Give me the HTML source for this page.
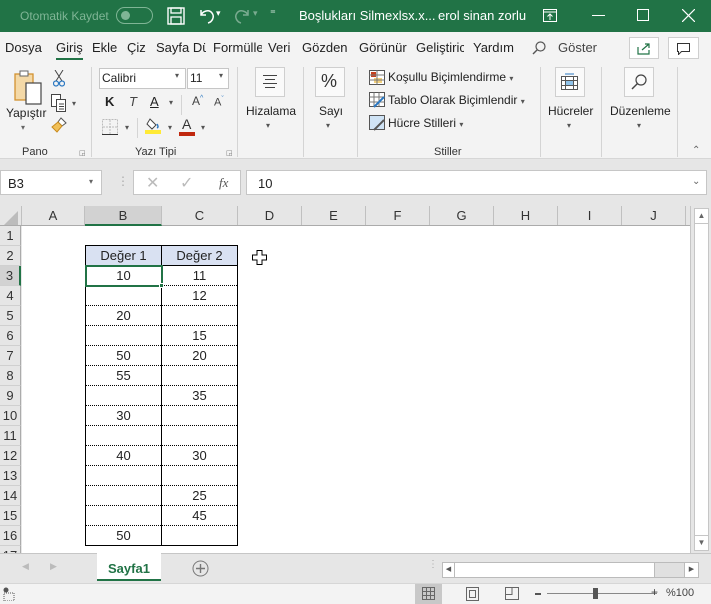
<!DOCTYPE html>
<html><head><meta charset="utf-8">
<style>
*{margin:0;padding:0;box-sizing:border-box}
body{width:711px;height:604px;overflow:hidden;font-family:"Liberation Sans",sans-serif;background:#f3f3f3;position:relative;color:#222}
.a{position:absolute}
.t{font-size:13px;white-space:nowrap}
#title{left:0;top:0;width:711px;height:32px;background:#217346;color:#fff}
#tabs{top:32px;left:0;width:711px;height:30px;background:#f3f3f3}
#rib{top:62px;left:0;width:711px;height:97px;background:#f3f3f3;border-bottom:1px solid #d6d6d6}
.sep{position:absolute;width:1px;background:#d4d4d4}
.grp{font-size:11px;color:#333}
.btnbox{position:absolute;border:1px solid #cfcfcf;background:#fafafa}
#fbar{top:159px;left:0;width:711px;height:48px;background:#e6e6e6}
.box{position:absolute;background:#fff;border:1px solid #c6c6c6}
#hdr{top:206px;left:0;width:691px;height:20px;background:#e6e6e6;border-bottom:1px solid #ababab}
.ch{position:absolute;top:0;height:19px;border-right:1px solid #c0c0c0;text-align:center;font-size:13px;line-height:20px;color:#333}
.rh{position:absolute;left:0;width:21px;height:20px;background:#e6e6e6;border-bottom:1px solid #d0d0d0;border-right:1px solid #ababab;text-align:center;font-size:13px;line-height:20px;color:#333}
#grid{top:226px;left:22px;width:668px;height:327px;background:#fff}
.cell{position:absolute;font-size:13px;text-align:center;line-height:20px;font-family:"Liberation Sans",sans-serif}
</style></head><body>
<div id="title" class="a">
 <div class="a t" style="left:20px;top:9px;color:#7fb595;font-size:12px">Otomatik Kaydet</div>
 <div class="a" style="left:116px;top:7px;width:37px;height:17px;border:1.5px solid #7fb595;border-radius:9px"><div style="position:absolute;left:4px;top:3px;width:9px;height:9px;border-radius:50%;background:#7fb595"></div></div>
 <svg class="a" style="left:167px;top:7px" width="18" height="18"><rect x="1" y="1" width="16" height="16" fill="none" stroke="#fff" stroke-width="1.4"/><rect x="4" y="1" width="10" height="5" fill="none" stroke="#fff" stroke-width="1.3"/><rect x="4" y="10" width="10" height="7" fill="none" stroke="#fff" stroke-width="1.3"/></svg>
 <svg class="a" style="left:197px;top:6px" width="20" height="18"><path d="M4 4v5h5M4 9c2-4 8-6 11-2 3 4 0 9-4 10" fill="none" stroke="#fff" stroke-width="1.5"/></svg>
 <div class="a t" style="left:216px;top:8px;font-size:9px">▾</div>
 <svg class="a" style="left:232px;top:6px;opacity:.4" width="20" height="18"><path d="M16 4v5h-5M16 9c-2-4-8-6-11-2-3 4 0 9 4 10" fill="none" stroke="#fff" stroke-width="1.5"/></svg>
 <div class="a t" style="left:253px;top:8px;font-size:9px;opacity:.4">▾</div>
 <div class="a t" style="left:270px;top:7px;font-size:11px">⁼</div>
 <div class="a t" style="left:299px;top:8px">Boşlukları Silmexlsx.x...</div>
 <div class="a t" style="left:438px;top:8px">erol sinan zorlu</div>
 <svg class="a" style="left:543px;top:9px" width="14" height="13"><rect x=".5" y=".5" width="13" height="12" fill="none" stroke="#fff"/><path d="M1 3h12M7 11V5M4.5 7.5L7 5l2.5 2.5" fill="none" stroke="#fff"/></svg>
 <div class="a" style="left:592px;top:15px;width:13px;height:1px;background:#fff"></div>
 <div class="a" style="left:637px;top:9px;width:12px;height:12px;border:1px solid #fff"></div>
 <svg class="a" style="left:682px;top:9px" width="13" height="13"><path d="M0 0L13 13M13 0L0 13" stroke="#fff" stroke-width="1.2"/></svg>
</div>
<div id="tabs" class="a">
 <div class="a t" style="left:5px;top:8px">Dosya</div>
 <div class="a t" style="left:56px;top:8px">Giriş</div>
 <div class="a" style="left:56px;top:26px;width:27px;height:2px;background:#217346"></div>
 <div class="a t" style="left:92px;top:8px">Ekle</div>
 <div class="a t" style="left:127px;top:8px">Çiz</div>
 <div class="a t" style="left:156px;top:8px;width:50px;overflow:hidden">Sayfa Dü</div>
 <div class="a t" style="left:213px;top:8px;width:49px;overflow:hidden">Formülle</div>
 <div class="a t" style="left:268px;top:8px">Veri</div>
 <div class="a t" style="left:302px;top:8px">Gözden</div>
 <div class="a t" style="left:359px;top:8px">Görünür</div>
 <div class="a t" style="left:416px;top:8px;width:48px;overflow:hidden">Geliştiric</div>
 <div class="a t" style="left:473px;top:8px">Yardım</div>
 <svg class="a" style="left:532px;top:9px" width="14" height="14"><circle cx="8.5" cy="5.5" r="4.5" fill="none" stroke="#555" stroke-width="1.2"/><path d="M5 9L1 13" stroke="#555" stroke-width="1.4"/></svg>
 <div class="a t" style="left:558px;top:8px;color:#444">Göster</div>
 <div class="btnbox" style="left:629px;top:5px;width:30px;height:22px;background:#fff"></div>
 <svg class="a" style="left:637px;top:10px" width="14" height="13"><path d="M1 5v7h11V8M5 8l7-6M8 2h4v4" fill="none" stroke="#217346" stroke-width="1.2"/></svg>
 <div class="btnbox" style="left:668px;top:5px;width:31px;height:22px;background:#fff"></div>
 <svg class="a" style="left:677px;top:11px" width="13" height="12"><path d="M.5.5h12v8h-8l-3 3v-3h-1z" fill="none" stroke="#333"/></svg>
</div>
<div id="rib" class="a">
 <svg class="a" style="left:13px;top:8px" width="30" height="36"><rect x="2" y="4" width="18" height="26" fill="#f4d9a7" stroke="#d39230" stroke-width="1.3"/><rect x="7" y="1" width="8" height="5" fill="#fff" stroke="#666"/><rect x="13" y="13" width="15" height="21" fill="#fff" stroke="#444" stroke-width="1.2"/></svg>
 <div class="a t" style="left:6px;top:44px;font-size:12px">Yapıştır</div>
 <div class="a t" style="left:21px;top:61px;font-size:8px;color:#666">▾</div>
 <svg class="a" style="left:53px;top:8px" width="12" height="17"><path d="M2 0l7 11M10 0L3 11" stroke="#444"/><circle cx="3" cy="13.5" r="2.5" fill="none" stroke="#2b78c2" stroke-width="1.2"/><circle cx="9" cy="13.5" r="2.5" fill="none" stroke="#2b78c2" stroke-width="1.2"/></svg>
 <svg class="a" style="left:51px;top:32px" width="16" height="18"><rect x=".5" y=".5" width="9" height="12" fill="#fff" stroke="#444"/><rect x="5.5" y="5.5" width="9" height="12" fill="#fff" stroke="#444"/><path d="M8 10h5M8 12.5h5M8 15h5" stroke="#444"/></svg>
 <div class="a t" style="left:72px;top:37px;font-size:8px;color:#555">▾</div>
 <svg class="a" style="left:51px;top:55px" width="16" height="16"><path d="M10 1l5 5-4 3-4-4z" fill="#fff" stroke="#555"/><path d="M1 10l6-5 4 4-5 6z" fill="#f1c057" stroke="#c88a1c"/></svg>
 <div class="a grp" style="left:22px;top:84px">Pano</div>
 <div class="a" style="left:79px;top:87px;font-size:7px;color:#777">◲</div>
 <div class="sep" style="left:91px;top:5px;height:90px"></div>
 <div class="box" style="left:99px;top:6px;width:87px;height:21px;border-color:#c6c6c6"></div>
 <div class="a t" style="left:102px;top:9px;font-size:12px">Calibri</div>
 <div class="a" style="left:175px;top:9px;font-size:8px;color:#555">▾</div>
 <div class="box" style="left:187px;top:6px;width:42px;height:21px"></div>
 <div class="a t" style="left:190px;top:9px;font-size:12px">11</div>
 <div class="a" style="left:219px;top:9px;font-size:8px;color:#555">▾</div>
 <div class="a t" style="left:105px;top:32px;font-weight:bold;font-size:13px">K</div>
 <div class="a t" style="left:129px;top:32px;font-style:italic;font-size:13px;color:#444">T</div>
 <div class="a t" style="left:150px;top:32px;text-decoration:underline;font-size:13px">A</div>
 <div class="a" style="left:169px;top:36px;font-size:8px;color:#555">▾</div>
 <div class="sep" style="left:181px;top:33px;height:20px"></div>
 <div class="a t" style="left:192px;top:32px;font-size:12px;color:#444">A<sup style="font-size:7px;color:#2b78c2">^</sup></div>
 <div class="a t" style="left:214px;top:34px;font-size:11px;color:#444">A<sup style="font-size:7px;color:#2b78c2">ˇ</sup></div>
 <svg class="a" style="left:102px;top:57px" width="16" height="16"><rect x=".5" y=".5" width="15" height="15" fill="none" stroke="#bbb" stroke-dasharray="2 1"/><path d="M8 1v14M1 8h14" stroke="#bbb" stroke-dasharray="2 1"/><path d="M0 15.5h16" stroke="#333"/></svg>
 <div class="a" style="left:125px;top:61px;font-size:8px;color:#555">▾</div>
 <div class="sep" style="left:137px;top:56px;height:20px"></div>
 <svg class="a" style="left:145px;top:55px" width="16" height="18"><path d="M5 2l6 6-4 4-5-5z" fill="#fff" stroke="#444"/><path d="M12 7q2 3 0 4" stroke="#2b78c2" fill="none" stroke-width="1.5"/><rect x="0" y="13" width="16" height="4" fill="#ffea36"/></svg>
 <div class="a" style="left:168px;top:61px;font-size:8px;color:#555">▾</div>
 <div class="a t" style="left:182px;top:54px;font-size:14px;color:#333">A</div>
 <div class="a" style="left:179px;top:70px;width:16px;height:4px;background:#c0280e"></div>
 <div class="a" style="left:201px;top:61px;font-size:8px;color:#555">▾</div>
 <div class="a grp" style="left:135px;top:84px">Yazı Tipi</div>
 <div class="a" style="left:226px;top:87px;font-size:7px;color:#777">◲</div>
 <div class="sep" style="left:237px;top:5px;height:90px"></div>
 <div class="btnbox" style="left:255px;top:5px;width:30px;height:30px"></div>
 <svg class="a" style="left:262px;top:13px" width="16" height="13"><path d="M1 .5h14M3 4.5h10M1 8.5h14M3 12.5h10" stroke="#444"/></svg>
 <div class="a t" style="left:246px;top:42px;font-size:12px">Hizalama</div>
 <div class="a" style="left:266px;top:59px;font-size:8px;color:#555">▾</div>
 <div class="sep" style="left:303px;top:5px;height:90px"></div>
 <div class="btnbox" style="left:315px;top:5px;width:30px;height:30px"></div>
 <div class="a t" style="left:321px;top:9px;font-size:18px;color:#333">%</div>
 <div class="a t" style="left:319px;top:42px;font-size:12px">Sayı</div>
 <div class="a" style="left:326px;top:59px;font-size:8px;color:#555">▾</div>
 <div class="sep" style="left:357px;top:5px;height:90px"></div>
 <svg class="a" style="left:369px;top:8px" width="16" height="15"><rect x=".5" y=".5" width="15" height="14" fill="#fff" stroke="#555"/><rect x="2" y="2" width="5" height="5" fill="#c5401f"/><rect x="5" y="8" width="8" height="5" fill="#f4d27f"/><path d="M8 .5v14M.5 5h15M.5 10h15" stroke="#777"/></svg>
 <div class="a t" style="left:388px;top:8px;font-size:12px">Koşullu Biçimlendirme <span style="font-size:8px;color:#555">▾</span></div>
 <svg class="a" style="left:369px;top:30px" width="17" height="16"><rect x=".5" y=".5" width="15" height="14" fill="#fff" stroke="#555"/><path d="M5 .5v14M10 .5v14M.5 5h15M.5 10h15" stroke="#777"/><path d="M5 15l10-10" stroke="#2b78c2" stroke-width="2"/></svg>
 <div class="a t" style="left:388px;top:31px;font-size:12px">Tablo Olarak Biçimlendir <span style="font-size:8px;color:#555">▾</span></div>
 <svg class="a" style="left:369px;top:53px" width="17" height="16"><rect x=".5" y=".5" width="15" height="14" fill="#cfe3f5" stroke="#555"/><path d="M5 15l10-10" stroke="#555" stroke-width="2"/></svg>
 <div class="a t" style="left:388px;top:54px;font-size:12px">Hücre Stilleri <span style="font-size:8px;color:#555">▾</span></div>
 <div class="a grp" style="left:434px;top:84px">Stiller</div>
 <div class="sep" style="left:540px;top:5px;height:90px"></div>
 <div class="btnbox" style="left:555px;top:5px;width:30px;height:30px"></div>
 <svg class="a" style="left:561px;top:11px" width="18" height="18"><rect x=".5" y="3.5" width="16" height="13" fill="#fff" stroke="#555"/><rect x="4" y="7" width="9" height="5" fill="#8fc3ea"/><path d="M.5 7.5h16M.5 12.5h16M4.5 3.5v13M12.5 3.5v13" stroke="#555"/><path d="M4 1h9" stroke="#2b78c2"/></svg>
 <div class="a t" style="left:548px;top:42px;font-size:12px">Hücreler</div>
 <div class="a" style="left:567px;top:59px;font-size:8px;color:#555">▾</div>
 <div class="sep" style="left:601px;top:5px;height:90px"></div>
 <div class="btnbox" style="left:624px;top:5px;width:30px;height:30px"></div>
 <svg class="a" style="left:631px;top:12px" width="16" height="16"><circle cx="10" cy="6" r="5" fill="none" stroke="#444" stroke-width="1.2"/><path d="M6.5 9.5L1 15" stroke="#444" stroke-width="1.5"/></svg>
 <div class="a t" style="left:610px;top:42px;font-size:12px">Düzenleme</div>
 <div class="a" style="left:637px;top:59px;font-size:8px;color:#555">▾</div>
 <div class="sep" style="left:677px;top:5px;height:90px"></div>
 <div class="a" style="left:692px;top:83px;font-size:10px;color:#666">⌃</div>
</div>
<div id="fbar" class="a">
 <div class="box" style="left:0;top:11px;width:102px;height:25px"></div>
 <div class="a t" style="left:8px;top:17px">B3</div>
 <div class="a" style="left:89px;top:18px;font-size:8px;color:#666">▾</div>
 <div class="a" style="left:117px;top:15px;font-size:12px;color:#aaa">⋮</div>
 <div class="box" style="left:133px;top:11px;width:108px;height:25px"></div>
 <div class="a t" style="left:146px;top:14px;font-size:16px;color:#bbb">✕</div>
 <div class="a t" style="left:180px;top:14px;font-size:16px;color:#bbb">✓</div>
 <div class="a t" style="left:219px;top:16px;font-family:'Liberation Serif',serif;font-style:italic;color:#555">fx</div>
 <div class="box" style="left:246px;top:11px;width:461px;height:25px"></div>
 <div class="a t" style="left:258px;top:17px">10</div>
 <div class="a" style="left:692px;top:17px;font-size:10px;color:#666">⌄</div>
</div>
<div id="hdr" class="a">
 <svg class="a" style="left:4px;top:5px" width="15" height="14"><path d="M14 0v14H0z" fill="#bcbcbc"/></svg>
 <div class="ch" style="left:0;width:22px"></div>
 <div class="ch" style="left:22px;width:63px">A</div>
 <div class="ch" style="left:85px;width:77px;background:#d2d2d2;border-bottom:2px solid #217346;height:20px">B</div>
 <div class="ch" style="left:162px;width:76px">C</div>
 <div class="ch" style="left:238px;width:64px">D</div>
 <div class="ch" style="left:302px;width:64px">E</div>
 <div class="ch" style="left:366px;width:64px">F</div>
 <div class="ch" style="left:430px;width:64px">G</div>
 <div class="ch" style="left:494px;width:64px">H</div>
 <div class="ch" style="left:558px;width:64px">I</div>
 <div class="ch" style="left:622px;width:64px">J</div>
</div>
<div class="a" style="left:0;top:226px;width:22px;height:327px;background:#e6e6e6;overflow:hidden">
 <div class="rh" style="top:0">1</div><div class="rh" style="top:20px">2</div>
 <div class="rh" style="top:40px;background:#d2d2d2;border-right:2px solid #217346">3</div>
 <div class="rh" style="top:60px">4</div><div class="rh" style="top:80px">5</div><div class="rh" style="top:100px">6</div>
 <div class="rh" style="top:120px">7</div><div class="rh" style="top:140px">8</div><div class="rh" style="top:160px">9</div>
 <div class="rh" style="top:180px">10</div><div class="rh" style="top:200px">11</div><div class="rh" style="top:220px">12</div>
 <div class="rh" style="top:240px">13</div><div class="rh" style="top:260px">14</div><div class="rh" style="top:280px">15</div>
 <div class="rh" style="top:300px">16</div><div class="rh" style="top:320px">17</div>
</div>
<div id="grid" class="a"></div>
<div class="a" style="left:690px;top:206px;width:1px;height:347px;background:#c6c6c6"></div>
<div class="a" style="left:691px;top:206px;width:20px;height:347px;background:#e6e6e6"></div>
<div class="a" style="left:694px;top:208px;width:15px;height:343px;background:#fff;border:1px solid #c6c6c6"></div>
<div class="a" style="left:694px;top:208px;width:15px;height:16px;border:1px solid #c6c6c6;font-size:8px;color:#666;text-align:center;line-height:14px">▲</div>
<div class="a" style="left:694px;top:535px;width:15px;height:16px;border:1px solid #c6c6c6;font-size:8px;color:#666;text-align:center;line-height:14px">▼</div>
<!-- table -->
<div class="a" style="left:85px;top:245px;width:153px;height:301px;border:1px solid #000;background:#fff"></div>
<div class="a" style="left:86px;top:246px;width:151px;height:19px;background:#d9e1f2"></div>
<div class="a" style="left:85px;top:265px;width:153px;height:1px;background:#000"></div>
<svg class="a" style="left:86px;top:285px" width="151" height="261" shape-rendering="crispEdges"><g stroke="#000" stroke-dasharray="1 1"><path d="M0 .5h151M0 20.5h151M0 40.5h151M0 60.5h151M0 80.5h151M0 100.5h151M0 120.5h151M0 140.5h151M0 160.5h151M0 180.5h151M0 200.5h151M0 220.5h151M0 240.5h151"/></g></svg>
<div class="a" style="left:161px;top:245px;width:1px;height:301px;background:#000"></div>
<div class="a" style="left:85px;top:265px;width:78px;height:22px;border:2px solid #217346"></div>
<div class="a" style="left:159px;top:283px;width:5px;height:5px;background:#217346;border:1px solid #fff"></div>
<div class="cell" style="left:86px;top:246px;width:75px">Değer 1</div>
<div class="cell" style="left:162px;top:246px;width:75px">Değer 2</div>
<div class="cell" style="left:86px;top:266px;width:75px">10</div>
<div class="cell" style="left:162px;top:266px;width:75px">11</div>
<div class="cell" style="left:162px;top:286px;width:75px">12</div>
<div class="cell" style="left:86px;top:306px;width:75px">20</div>
<div class="cell" style="left:162px;top:326px;width:75px">15</div>
<div class="cell" style="left:86px;top:346px;width:75px">50</div>
<div class="cell" style="left:162px;top:346px;width:75px">20</div>
<div class="cell" style="left:86px;top:366px;width:75px">55</div>
<div class="cell" style="left:162px;top:386px;width:75px">35</div>
<div class="cell" style="left:86px;top:406px;width:75px">30</div>
<div class="cell" style="left:86px;top:446px;width:75px">40</div>
<div class="cell" style="left:162px;top:446px;width:75px">30</div>
<div class="cell" style="left:162px;top:486px;width:75px">25</div>
<div class="cell" style="left:162px;top:506px;width:75px">45</div>
<div class="cell" style="left:86px;top:526px;width:75px">50</div>
<svg class="a" style="left:252px;top:250px" width="15" height="15"><path d="M5 .5h5v4.5h4.5v5H10v4.5H5V10H.5V5H5z" fill="#fff" stroke="#000"/></svg>
<!-- sheet tabs -->
<div class="a" style="left:0;top:553px;width:711px;height:30px;background:#e6e6e6;border-top:1px solid #c6c6c6"></div>
<div class="a" style="left:22px;top:561px;font-size:9px;color:#bbb">◀</div>
<div class="a" style="left:50px;top:561px;font-size:9px;color:#bbb">▶</div>
<div class="a" style="left:97px;top:553px;width:64px;height:28px;background:#fff;border-bottom:2px solid #217346"></div>
<div class="a t" style="left:108px;top:561px;font-weight:bold;color:#217346;font-size:13px">Sayfa1</div>
<svg class="a" style="left:192px;top:560px" width="17" height="17"><circle cx="8.5" cy="8.5" r="7.5" fill="none" stroke="#777"/><path d="M8.5 4v9M4 8.5h9" stroke="#777" stroke-width="1.4"/></svg>
<div class="a" style="left:428px;top:559px;font-size:10px;color:#aaa">⋮</div>
<div class="a" style="left:442px;top:562px;width:257px;height:16px;border:1px solid #bbb;background:#e0e0e0"></div>
<div class="a" style="left:442px;top:562px;width:213px;height:16px;border:1px solid #bbb;background:#fff"></div>
<div class="a" style="left:442px;top:562px;width:13px;height:16px;border:1px solid #bbb;background:#fff;font-size:7px;line-height:14px;text-align:center;color:#555">◀</div>
<div class="a" style="left:684px;top:562px;width:15px;height:16px;border:1px solid #bbb;background:#fff;font-size:7px;line-height:14px;text-align:center;color:#555">▶</div>
<!-- status -->
<div class="a" style="left:0;top:583px;width:711px;height:21px;background:#f3f3f3;border-top:1px solid #d6d6d6"></div>
<svg class="a" style="left:3px;top:587px" width="12" height="14"><circle cx="3" cy="3" r="2.5" fill="#555"/><rect x="1" y="6" width="10" height="8" fill="none" stroke="#555" stroke-dasharray="1 1"/></svg>
<div class="a" style="left:415px;top:584px;width:27px;height:20px;background:#c8c8c8"></div>
<svg class="a" style="left:422px;top:587px" width="13" height="13"><rect x=".5" y=".5" width="12" height="12" fill="none" stroke="#666"/><path d="M4.5 0v13M8.5 0v13M0 4.5h13M0 8.5h13" stroke="#666"/></svg>
<svg class="a" style="left:466px;top:587px" width="13" height="14"><rect x=".5" y=".5" width="12" height="13" fill="none" stroke="#666"/><rect x="3.5" y="3.5" width="6" height="7" fill="none" stroke="#666"/></svg>
<svg class="a" style="left:505px;top:587px" width="14" height="13"><path d="M.5 12.5V.5h13v12zM7 .5v7H.5" fill="none" stroke="#666"/></svg>
<div class="a" style="left:535px;top:593px;width:6px;height:2px;background:#555"></div>
<div class="a" style="left:547px;top:593px;width:110px;height:1px;background:#888"></div>
<div class="a" style="left:593px;top:588px;width:5px;height:11px;background:#555"></div>
<div class="a t" style="left:651px;top:585px;font-size:12px;color:#444">+</div>
<div class="a t" style="left:666px;top:587px;font-size:11px;color:#444">%100</div>
</body></html>
